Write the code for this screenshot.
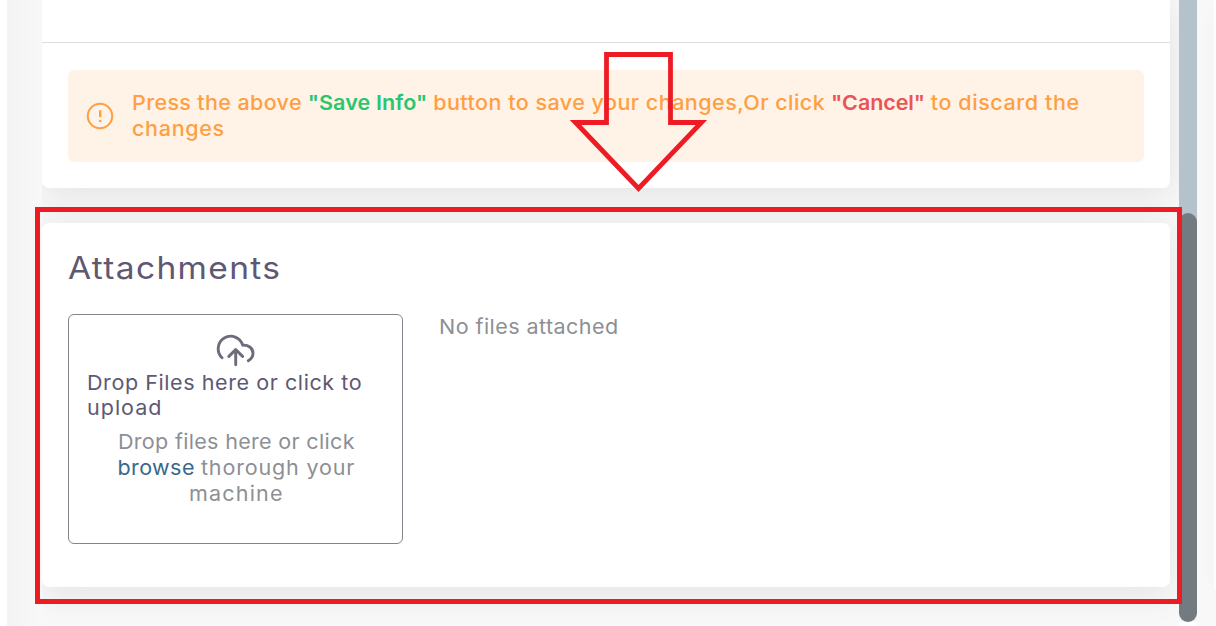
<div class="page">
  <aside class="gutter"></aside>
  <main class="scroller">
    <section class="card info">
      <div class="info-body"></div>
      <div class="alert">
        <svg class="alert-icon" width="28" height="28" viewBox="0 0 28 28" fill="none" stroke="#ff9f43" stroke-width="2.1">
          <circle cx="14" cy="14" r="12.2" />
          <path d="M14.2 8.3v6.6M14.2 17.9v2.1" stroke-width="2.4" />
        </svg>
        <p>
          <span class="l1">Press the above</span>
          <b class="save">"Save Info"</b>
          <span class="l2">button to save your changes,Or click</span>
          <b class="cancel">"Cancel"</b>
          <span class="l3">to discard the</span>
          <span class="l4">changes</span>
        </p>
      </div>
    </section>

    <section class="card attachments">
      <h2>Attachments</h2>
      <div class="row">
        <div class="dropzone">
          <svg class="cloud" width="40" height="34" viewBox="0 0 40 34" fill="none" stroke="#6e6b7b" stroke-width="2.9" stroke-linecap="round" stroke-linejoin="round">
            <path d="M6 23.700A12.500 12.500 0 1 1 26.700 11.200C32 10.600 37 14 37 19.200C37 22.300 35.200 25 32.300 26.700" />
            <path d="M19.700 30.800V15.600M12.800 22.400L19.700 15.600L26.600 22.400" />
          </svg>
          <h5><span class="d1">Drop Files here or click to</span> <span class="d2">upload</span></h5>
          <p class="hint">
            <span class="h1">Drop files here or click</span><br />
            <a class="browse">browse</a> <span class="h2">thorough your</span><br />
            <span class="h3">machine</span>
          </p>
        </div>
        <p class="empty">No files attached</p>
      </div>
    </section>
  </main>
  <div class="track"><div class="thumb"></div></div>
  <div class="side"><div class="side-card"></div></div>

  <div class="frame"></div>
  <svg class="arrow" width="140" height="146" viewBox="0 0 140 146" fill="none" stroke="#ed1c24" stroke-width="4.8">
    <path d="M36.500 5.500H100.500V73.500H131.500L68.500 139.500L5.500 73.500H36.500Z" stroke-linejoin="miter" />
  </svg>
</div>

<style>
  :global(body) { background: #fff; overflow: hidden; }
  .page {
    position: relative;
    display: flex;
    box-sizing: border-box;
    width: 1216px;
    height: 626px;
    padding-left: 7px;
    overflow: hidden;
    color: #8c8f94;
    font: 400 20.5px/26px Inter, "Open Sans", sans-serif;
  }
  p, h2, h5 { margin: 0; font-weight: 400; }
  .gutter { flex: 0 0 35px; background: linear-gradient(90deg, #f3f3f3, #f5f5f5 40%, #f8f8f8); }
  .scroller {
    flex: 0 0 1137px;
    display: flex;
    flex-direction: column;
    gap: 35px;
    height: 626px;
    overflow: hidden;
    background: #f8f8f8;
  }
  .card {
    flex: none;
    box-sizing: border-box;
    width: 1128px;
    background: #fff;
    border-radius: 7px;
    box-shadow: 0 6px 36px rgba(34, 41, 47, 0.1);
  }
  .info { height: 188px; border-radius: 0 0 7px 7px; }
  .info-body { height: 42px; border-bottom: 1px solid #d9dfe3; }
  .alert {
    display: flex;
    align-items: center;
    gap: 18px;
    box-sizing: border-box;
    height: 92px;
    margin: 27px 26px 0;
    padding: 0 18px;
    border-radius: 6px;
    background: #fff2e6;
    color: #ff9f43;
  }
  .alert-icon { flex: none; }
  .alert p { font-weight: 500; white-space: nowrap; transform: scaleX(1.05); transform-origin: left; }
  .l1 { letter-spacing: 0.33px; }
  .l2 { letter-spacing: 0.44px; }
  .l3 { letter-spacing: 0.55px; }
  .l4 { display: block; letter-spacing: 0.65px; }
  b { font-weight: 600; }
  .save { color: #28c76f; letter-spacing: 0.1px; }
  .cancel { color: #ea5455; letter-spacing: -0.1px; }
  .attachments { height: 364px; padding: 25px 26px; }
  h2 {
    color: #5e5873;
    font-size: 30.5px;
    line-height: 40px;
    letter-spacing: 1.2px;
    transform: scaleX(1.1);
    transform-origin: left;
  }
  .row { display: flex; gap: 35.5px; margin-top: 26px; }
  .dropzone {
    flex: 0 0 335px;
    display: flex;
    flex-direction: column;
    align-items: center;
    box-sizing: border-box;
    height: 230px;
    padding: 19px 18px 0;
    border: 1px solid #85848d;
    border-radius: 6px;
  }
  .cloud { flex: none; }
  h5 {
    width: 100%;
    margin-top: 2px;
    color: #5e5873;
    font-size: 20.5px;
    line-height: 25px;
    transform: scaleX(1.05);
    transform-origin: left;
  }
  .d1 { display: block; letter-spacing: 0.54px; white-space: nowrap; }
  .d2 { letter-spacing: 0.95px; }
  .hint { margin-top: 9px; padding-left: 2px; text-align: center; white-space: nowrap; transform: scaleX(1.05); }
  .h1 { letter-spacing: 0.3px; }
  .browse { color: #38688a; letter-spacing: 0.4px; }
  .h2 { letter-spacing: 0.8px; }
  .h3 { letter-spacing: 1.1px; }
  .empty { letter-spacing: 0.42px; white-space: nowrap; transform: scaleX(1.05); transform-origin: left; }
  .track { flex: 0 0 18px; height: 622px; background: linear-gradient(#b4c2cc 230px, #f3f4f4 230px); }
  .thumb { height: 409px; margin-top: 213px; border-radius: 9px; background: #737b81; }
  .side { flex: 1; display: flex; justify-content: flex-end; overflow: hidden; background: #f8f8f8; }
  .side-card { width: 2px; height: 590px; background: #fff; border-radius: 0 0 0 7px; box-shadow: 0 6px 36px rgba(34, 41, 47, 0.1), -2px 0 16px rgba(34, 41, 47, 0.05); }
  .frame {
    position: absolute;
    left: 35px;
    top: 207px;
    box-sizing: border-box;
    width: 1147px;
    height: 397px;
    border: 5px solid #ed1c24;
  }
  .arrow { position: absolute; left: 570px; top: 49px; }
</style>
